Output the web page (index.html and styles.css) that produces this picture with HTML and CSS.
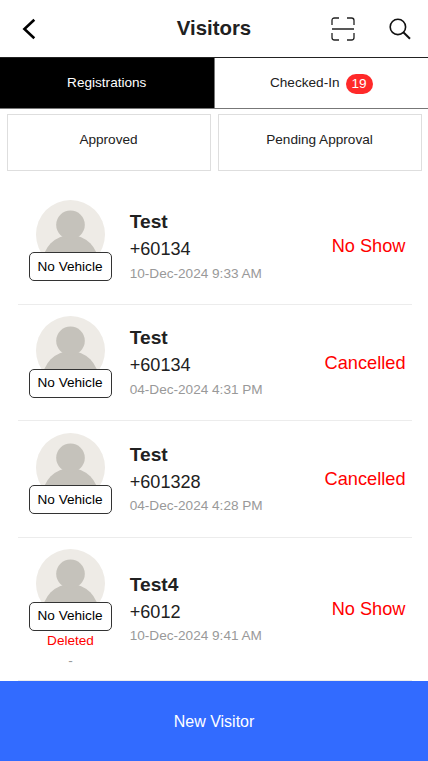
FILE: index.html
```html
<!DOCTYPE html>
<html lang="en">
<head>
<meta charset="utf-8">
<title>Visitors</title>
<link rel="stylesheet" href="styles.css">
</head>
<body>
<svg class="defs" width="0" height="0">
  <symbol id="avatar" viewBox="0 0 68 68">
    <clipPath id="round"><circle cx="34" cy="34" r="34"/></clipPath>
    <g clip-path="url(#round)">
      <rect width="68" height="68" fill="#eeebe6"/>
      <ellipse cx="34" cy="62" rx="27.5" ry="27.5" fill="#c5c2bb"/>
      <circle cx="34" cy="24.5" r="14.1" fill="#c5c2bb"/>
    </g>
  </symbol>
</svg>
<div class="app">
  <header class="header">
    <svg class="back" width="14" height="22" viewBox="0 0 14 22"><path d="M12.3 1.7 2.4 11l9.9 9.3" fill="none" stroke="#000" stroke-width="2.6"/></svg>
    <h1>Visitors</h1>
    <div class="actions">
      <svg width="24" height="24" viewBox="0 0 24 24"><path d="M1 8V3.500Q1 1 3.500 1H8M16 1h4.500Q23 1 23 3.500V8M1 16v4.500Q1 23 3.500 23H8M16 23h4.500Q23 23 23 20.500V16M1 12h22" fill="none" stroke="#222" stroke-width="1.300"/></svg>
      <svg width="22" height="22" viewBox="0 0 22 22"><g fill="none" stroke="#111"><circle cx="8.900" cy="8.900" r="7.700" stroke-width="1.600"/><path d="m14.300 14.300 6.700 6.500" stroke-width="2"/></g></svg>
    </div>
  </header>
  <nav class="tabs">
    <div class="tab active">Registrations</div>
    <div class="tab">Checked-In<span class="count">19</span></div>
  </nav>
  <div class="filters">
    <div class="filter">Approved</div>
    <div class="filter">Pending Approval</div>
  </div>
  <main class="list">
    <article class="row">
      <div class="photo"><svg class="avatar"><use href="#avatar"/></svg><div class="vehicle">No Vehicle</div></div>
      <div class="info"><strong>Test</strong><span class="phone">+60134</span><time>10-Dec-2024 9:33 AM</time></div>
      <div class="status">No Show</div>
    </article>
    <article class="row">
      <div class="photo"><svg class="avatar"><use href="#avatar"/></svg><div class="vehicle">No Vehicle</div></div>
      <div class="info"><strong>Test</strong><span class="phone">+60134</span><time>04-Dec-2024 4:31 PM</time></div>
      <div class="status">Cancelled</div>
    </article>
    <article class="row">
      <div class="photo"><svg class="avatar"><use href="#avatar"/></svg><div class="vehicle">No Vehicle</div></div>
      <div class="info"><strong>Test</strong><span class="phone">+601328</span><time>04-Dec-2024 4:28 PM</time></div>
      <div class="status">Cancelled</div>
    </article>
    <article class="row tall">
      <div class="photo"><svg class="avatar"><use href="#avatar"/></svg><div class="vehicle">No Vehicle</div><div class="deleted">Deleted</div><div class="dash">-</div></div>
      <div class="info"><strong>Test4</strong><span class="phone">+6012</span><time>10-Dec-2024 9:41 AM</time></div>
      <div class="status">No Show</div>
    </article>
  </main>
  <footer class="new">New Visitor</footer>
</div>
</body>
</html>
```
FILE: styles.css
```css
* { box-sizing: border-box; }
body {
  margin: 0;
  background: #fff;
  color: #212121;
  font: 13.6px/20px "Liberation Sans", Arial, sans-serif;
}
.defs { display: block; height: 0; }
.app { display: flex; flex-direction: column; height: 761px; overflow: hidden; }
.header {
  display: grid;
  grid-template-columns: 1fr auto 1fr;
  align-items: center;
  height: 57px;
  padding: 1px 17px 0 22px;
}
.header h1 { margin: -2px 5px 0 0; font-size: 20.4px; line-height: 24px; }
.actions { display: flex; align-items: center; justify-content: flex-end; gap: 34px; }
.tabs { display: flex; height: 52px; border-top: 1px solid #222; border-bottom: 1px solid #777; }
.tab { display: flex; flex: 1; align-items: center; justify-content: center; }
.tab.active { background: #000; color: #fff; }
.tab + .tab { border-left: 1px solid #777; }
.count {
  width: 27px;
  height: 20px;
  margin: 2px 0 0 6px;
  border-radius: 10px;
  background: #ff2929;
  color: #fff;
  text-align: center;
}
.filters { display: flex; gap: 7px; padding: 5px 6px 0 7px; }
.filter { flex: 1; height: 57px; padding: 15px 1px 0 0; border: 1px solid #dedede; text-align: center; }
.list { flex: 1; padding: 18px 16px 0 18px; }
.row { display: flex; align-items: center; height: 116.4px; border-bottom: 1px solid #ececec; }
.row.tall { height: 143.6px; }
.photo { align-self: flex-start; width: 105px; padding-top: 11.4px; text-align: center; }
.avatar { display: block; width: 69px; height: 69px; margin: 0 18px; }
.vehicle {
  position: relative;
  width: 83px;
  height: 29px;
  margin: -16.6px 11px 0;
  padding: 3.5px 1px 0 0;
  border: 1px solid #333;
  border-radius: 5px;
  background: #fff;
  color: #000;
}
.deleted { margin-top: 0.6px; color: #f00; }
.dash { color: #999; }
.info { display: flex; flex: 1; flex-direction: column; padding: 0 0 1px 6.7px; }
.info strong { font-size: 19.2px; line-height: 28px; }
.phone { font-size: 18.1px; line-height: 27.5px; }
time { color: #999; }
.status { padding-right: 6.5px; color: #f00; font-size: 18.2px; }
.new {
  display: flex;
  align-items: center;
  justify-content: center;
  height: 80px;
  padding-top: 1px;
  background: #326bff;
  color: #fff;
  font-size: 16px;
}
```
